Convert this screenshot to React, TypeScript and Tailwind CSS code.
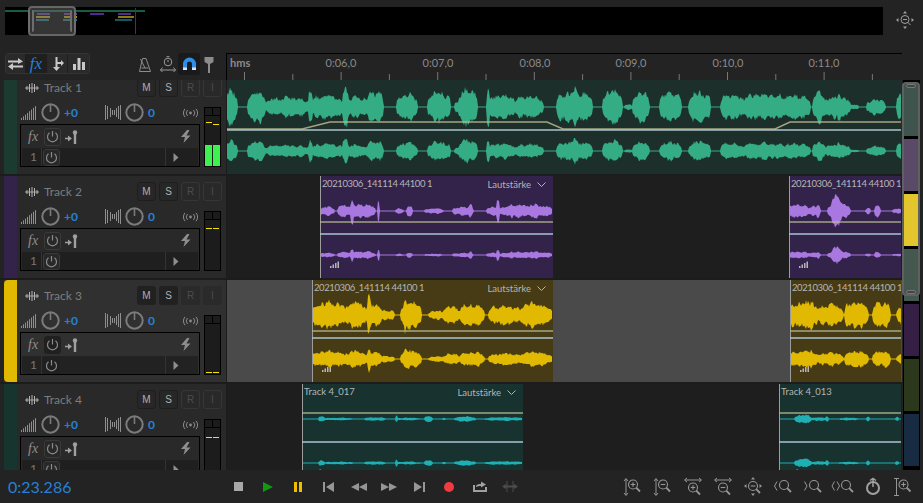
import type { ReactNode } from 'react';

const FONT = "font-['Lato','Noto_Sans',sans-serif]";

type Blob = [number, number, number];

const noise = (x: number, seed: number) => {
    const v = Math.sin(x * 12.9898 + seed) * 43758.5453;
    return v - Math.floor(v);
};

// builds a mirrored waveform outline from a list of [start, end, amplitude] bursts
function wavePath(blobs: Blob[], from: number, to: number, cy: number, k: number, seed: number) {
    const top: string[] = [];
    const bottom: string[] = [];
    for (let x = from; x <= to; x += 1) {
        let up = 0.6;
        let down = 0.6;
        const slow = 0.84 + 0.16 * Math.sin(x * 0.63 + seed) * Math.sin(x * 0.17 + seed);
        for (const [s, e, amp] of blobs) {
            if (x < s || x > e) continue;
            const env = Math.pow(Math.sin((Math.PI * (x - s + 0.5)) / (e - s + 1)), 0.25);
            up = Math.max(up, amp * k * env * slow * (0.72 + 0.38 * noise(x, seed)));
            down = Math.max(down, amp * k * env * slow * (0.72 + 0.38 * noise(x, seed + 7)));
        }
        top.push(`${x - 227},${(cy - up).toFixed(1)}`);
        bottom.unshift(`${x - 227},${(cy + down).toFixed(1)}`);
    }
    return `M${top.join(' L')} L${bottom.join(' L')} Z`;
}

const track1: Blob[] = [
    [222, 237, 19], [248, 265, 18], [265, 310, 11], [309, 312, 22], [312, 342, 14], [343, 348, 25], [345, 367, 12],
    [367, 383, 18], [397, 417, 15], [428, 450, 17], [438, 440, 21], [455, 459, 7], [459, 477, 21], [487, 489, 23], [489, 515, 14],
    [515, 543, 13], [557, 592, 18], [573, 576, 22], [603, 622, 19], [611, 613, 22], [625, 632, 3], [633, 649, 17],
    [660, 681, 17], [689, 710, 17], [699, 701, 21], [721, 740, 15], [738, 790, 15], [780, 810, 14], [813, 825, 17],
    [824, 850, 12], [838, 840, 22], [850, 858, 3], [867, 885, 9], [897, 905, 15],
];
const track2a: Blob[] = [
    [320, 334, 5], [338, 352, 7], [351, 353, 15], [350, 375, 8], [378, 379, 15], [396, 403, 3], [407, 412, 6],
    [425, 443, 3], [453, 473, 5], [469, 472, 9], [487, 500, 5], [497, 499, 17], [500, 553, 7], [511, 513, 10], [535, 538, 11],
];
const track2b: Blob[] = [
    [789, 808, 8], [808, 820, 6], [817, 819, 9], [832, 842, 19], [828, 850, 8], [866, 870, 4], [875, 880, 7], [893, 901, 3],
];
const track3a: Blob[] = [
    [312, 345, 15], [345, 366, 15], [367, 381, 14], [368, 370, 21], [381, 394, 6], [401, 421, 16], [404, 406, 24],
    [429, 445, 5], [443, 460, 10], [460, 484, 13], [489, 520, 11], [520, 548, 14], [548, 553, 7],
];
const track3b: Blob[] = [
    [789, 818, 15], [810, 813, 21], [818, 843, 12], [845, 868, 15], [873, 890, 15], [897, 906, 9],
];
const track4a: Blob[] = [
    [319, 324, 3.5], [324, 353, 1.5], [365, 385, 2], [396, 420, 1.5], [396, 397, 4], [425, 432, 3.5], [443, 445, 1.5],
    [455, 475, 3], [485, 523, 2],
];
const track4b: Blob[] = [
    [795, 811, 5], [811, 826, 2], [826, 828, 4], [839, 858, 1.5], [867, 869, 3.5], [896, 898, 3],
];

type Clip = { pos: string; title: string; right: boolean };

type Track = {
    name: string;
    strip: string;
    panel: string;
    lane: string;
    clipBg: string;
    clips: Clip[];
    wave: string;
    waves: { blobs: Blob[]; from: number; to: number }[];
    k: number;
    volume: string;
    yellow: string;
    green?: boolean;
    selected?: boolean;
};

const clip2 = '20210306_141114 44100 1';

const tracks: Track[] = [
    {
        name: 'Track 1', strip: 'bg-[#1b3a30]', panel: 'bg-[#292929]', lane: 'bg-[#1d2f2a]', clipBg: '', clips: [], wave: '#35ad84',
        waves: [{ blobs: track1, from: 227, to: 901 }], k: 0.62,
        volume: 'M0,57 L75,57 L103,50 L320,50 L336,57 L548,57 L563,50 L674,50', yellow: 'top-[14px]', green: true,
    },
    {
        name: 'Track 2', strip: 'bg-[#33224a]', panel: 'bg-[#292929]', lane: 'bg-[#1e1e1e]', clipBg: 'bg-[#33224a]',
        clips: [
            { pos: 'left-[93px] w-[233px]', title: clip2, right: true },
            { pos: 'left-[562px] w-[112px]', title: clip2, right: false },
        ],
        wave: '#a877e0',
        waves: [{ blobs: track2a, from: 321, to: 552 }, { blobs: track2b, from: 790, to: 901 }], k: 0.5,
        volume: 'M93,46 L326,46 M562,46 L674,46', yellow: 'top-[16px]',
    },
    {
        name: 'Track 3', strip: 'bg-[#e0b900] rounded-l-[4px]', panel: 'bg-[#303030]', lane: 'bg-[#4a4a4a]', clipBg: 'bg-[#463b14]',
        clips: [
            { pos: 'left-[85px] w-[241px]', title: clip2, right: true },
            { pos: 'left-[563px] w-[111px]', title: clip2, right: false },
        ],
        wave: '#e0b900',
        waves: [{ blobs: track3a, from: 313, to: 552 }, { blobs: track3b, from: 791, to: 901 }], k: 0.62,
        volume: 'M85,51 L326,51 M563,51 L674,51', yellow: 'top-[56px]', selected: true,
    },
    {
        name: 'Track 4', strip: 'bg-[#17352f]', panel: 'bg-[#292929]', lane: 'bg-[#1e1e1e]', clipBg: 'bg-[#183230]',
        clips: [
            { pos: 'left-[75px] w-[221px]', title: 'Track 4_017', right: true },
            { pos: 'left-[552px] w-[122px]', title: 'Track 4_013', right: false },
        ],
        wave: '#1fb0b4',
        waves: [{ blobs: track4a, from: 303, to: 522 }, { blobs: track4b, from: 780, to: 901 }], k: 1,
        volume: 'M75,29 L296,29 M552,29 L674,29', yellow: 'top-[17px]',
    },
];

const G = ({ w, h, className, children }: { w: number; h: number; className?: string; children: ReactNode }) => (
    <svg width={w} height={h} viewBox={`0 0 ${w} ${h}`} className={`shrink-0 ${className ?? ''}`} fill="none">
        {children}
    </svg>
);

const Knob = () => (
    <G w={19} h={19}>
        <circle cx="9.5" cy="9.5" r="8.2" stroke="#7b7b7b" strokeWidth="2" />
        <path d="M9.5 1.5V9" stroke="#7b7b7b" strokeWidth="1.6" />
    </G>
);

const VolBars = () => (
    <G w={15} h={15}>
        {[0, 2, 4, 6, 8, 10, 12, 14].map((x, i) => (
            <rect key={x} x={x} y={13 - i * 1.7} width="1" height={2 + i * 1.7} fill="#8f8f8f" />
        ))}
    </G>
);

const PanBars = () => (
    <G w={16} h={15}>
        {[
            [0, 0, 15], [2, 1, 13], [5, 3, 9], [7, 5, 5], [9, 5, 5], [11, 3, 9], [13, 1, 13], [15, 0, 15],
        ].map(([x, y, h]) => (
            <rect key={x} x={x} y={y} width="1" height={h} fill="#8f8f8f" />
        ))}
    </G>
);

const Sends = () => (
    <G w={15} h={10}>
        <circle cx="7.5" cy="5" r="1.4" fill="#8a8a8a" />
        <path d="M4.5 2a4.5 4.5 0 0 0 0 6M10.5 2a4.5 4.5 0 0 1 0 6M2 .8a7 7 0 0 0 0 8.4M13 .8a7 7 0 0 1 0 8.4" stroke="#8a8a8a" strokeWidth="1" />
    </G>
);

const TrackWave = () => (
    <G w={14} h={10}>
        <path d="M0 5H14" stroke="#a5a5a5" />
        {[[2, 3], [4.5, 1], [7, 0], [9.5, 1], [12, 3]].map(([x, y]) => (
            <rect key={x} x={x - 0.5} y={y} width="1" height={10 - y * 2} fill="#b5b5b5" />
        ))}
    </G>
);

const PowerBtn = ({ selected, small }: { selected?: boolean; small?: boolean }) => (
    <div className={`flex items-center justify-center rounded-[3px] w-[17px] ${small ? 'h-[17px]' : 'h-[18px]'} ${selected ? 'bg-[#202020]' : 'border border-[#3a3a3a] bg-[#282828]'}`}>
        <G w={13} h={13}>
            <path d="M6.5 1V6.5" stroke="#8a8a8a" strokeWidth="1.2" />
            <path d="M3.5 2.8a5 5 0 1 0 6 0" stroke="#8a8a8a" strokeWidth="1.2" />
        </G>
    </div>
);

const TrackButton = ({ label, dim, selected }: { label: string; dim?: boolean; selected?: boolean }) => (
    <div
        className={`flex w-[19px] h-[19px] items-center justify-center rounded-[3px] text-[10px] font-['Liberation_Sans',sans-serif]
            ${dim ? 'text-[#4c4c4c]' : 'text-[#b0b0b0]'}
            ${selected ? (dim ? 'bg-[#2a2a2a]' : 'bg-[#212121]') : dim ? 'border border-[#363636]' : 'border border-[#1e1e1e] bg-[#272727]'}`}
    >
        {label}
    </div>
);

const Meter = ({ t }: { t: Track }) => (
    <div className="relative mt-[4px] ml-[4px] flex h-[60px] w-[17px] flex-col border border-black bg-[#1c1c1c]">
        <div className="flex h-[8px] border-b border-black">
            <div className="w-1/2 border-r border-black" />
        </div>
        <div className={`absolute left-[1px] h-px w-[6px] bg-[#f4e300] ${t.yellow}`} />
        <div className={`absolute right-[1px] h-px w-[6px] bg-[#f4e300] ${t.yellow} ${t.green ? 'mt-[2px]' : ''}`} />
        {t.green && (
            <div className="absolute bottom-0 left-0 flex h-[21px] w-full gap-px">
                <div className="flex-1 bg-[#3df24f]" />
                <div className="flex-1 bg-[#3df24f]" />
            </div>
        )}
    </div>
);

const Header = ({ t }: { t: Track }) => (
    <div className={`ml-[4px] flex h-full w-[222px] shrink-0 ${t.panel}`}>
        <div className={`w-[13px] shrink-0 ${t.strip}`} />
        <div className="flex flex-1 flex-col pt-[6px]">
            <div className="flex h-[19px] items-center">
                <div className="ml-[8px]"><TrackWave /></div>
                <span className="ml-[5px] text-[12px] text-[#7d7d7d]">{t.name}</span>
                <div className="ml-auto mr-[4px] flex gap-[3px]">
                    <TrackButton label="M" selected={t.selected} />
                    <TrackButton label="S" selected={t.selected} />
                    <TrackButton label="R" dim selected={t.selected} />
                    <TrackButton label="I" dim selected={t.selected} />
                </div>
            </div>
            <div className="mt-[6px] flex items-start">
                <div className="w-[183px]">
                    <div className="flex h-[19px] items-center">
                        <div className="ml-[4px]"><VolBars /></div>
                        <div className="ml-[5px]"><Knob /></div>
                        <span className="ml-[4px] w-[41px] text-[12px] font-bold text-[#2680d8]">+0</span>
                        <PanBars />
                        <div className="ml-[4px]"><Knob /></div>
                        <span className="ml-[4px] w-[35px] text-[12px] font-bold text-[#2680d8]">0</span>
                        <Sends />
                    </div>
                    <div className="ml-[3px] mt-[2px] flex h-[43px] w-[180px] flex-col border border-black px-px">
                        <div className="flex h-[23px] items-center">
                            <span className="ml-[6px] w-[16px] font-['Liberation_Serif',serif] text-[14px] italic text-[#8e8e8e]">fx</span>
                            <PowerBtn selected={t.selected} />
                            <G w={13} h={14} className="ml-[4px]">
                                <path d="M0 8.500H4" stroke="#a0a0a0" strokeWidth="1.500" />
                                <path d="M3 5.500L7 8.500L3 11.500Z" fill="#a0a0a0" />
                                <circle cx="10" cy="2.500" r="2.200" fill="#a0a0a0" />
                                <rect x="8.800" y="4" width="2.400" height="10" fill="#a0a0a0" />
                            </G>
                            <G w={11} h={13} className="ml-auto mr-[7px]">
                                <path d="M7 0L1 7H5L3.500 13L10.500 5.500H6.500L9.500 0Z" fill="#8e8e8e" />
                            </G>
                        </div>
                        <div className={`flex h-[18px] items-center rounded-[2px] ${t.selected ? 'bg-[#222]' : 'bg-[#1f1f1f]'}`}>
                            <span className="w-[20px] border-r border-[#333] pl-[8px] text-[12px] leading-[18px] text-[#777]">1</span>
                            <div className="ml-px"><PowerBtn small selected={t.selected} /></div>
                            <div className="ml-[105px] flex h-full items-center border-l border-[#333] pl-[7px]">
                                <G w={6} h={9}>
                                    <path d="M0.500 0L5.500 4.500L0.500 9Z" fill="#8e8e8e" />
                                </G>
                            </div>
                        </div>
                    </div>
                </div>
                <Meter t={t} />
            </div>
        </div>
    </div>
);

const MiniBars = () => (
    <G w={10} h={7} className="absolute left-[9px] top-[85px]">
        {[0, 2.500, 5, 7.500].map((x, i) => (
            <rect key={x} x={x} y={5 - i * 1.500} width="1.500" height={2 + i * 1.500} fill="#b5b5b5" />
        ))}
    </G>
);

const ClipBox = ({ c, bg }: { c: Clip; bg: string }) => (
    <div className={`absolute top-0 h-full overflow-hidden border-l-[1.5px] border-[#9c9c9c] ${bg} ${c.pos}`}>
        <div className="flex h-[15px] items-center whitespace-nowrap pl-[1px] pt-[2px] text-[9.5px] text-[#b5b5b5]">
            <span className={c.title === clip2 ? 'tracking-[-0.4px]' : ''}>{c.title}</span>
            {c.right && (
                <div className="absolute right-[7px] top-[2px] flex items-center gap-[6px]">
                    <span>Lautstärke</span>
                    <G w={9} h={6}>
                        <path d="M0.500 0.500L4.500 4.500L8.500 0.500" stroke="#b5b5b5" />
                    </G>
                </div>
            )}
        </div>
        <MiniBars />
    </div>
);

// the pan line runs along the same spans as the volume line
function panSpan(t: Track, i: number) {
    const spans = t.volume.split('M').filter(Boolean)[i].match(/[\d.]+/g) as string[];
    return `M${spans[0]},58 L${spans[2]},58`;
}

const Lane = ({ t, seed }: { t: Track; seed: number }) => (
    <div className={`relative h-full flex-1 overflow-hidden ${t.lane}`}>
        {t.clips.map((c) => (
            <ClipBox key={c.pos} c={c} bg={t.clipBg} />
        ))}
        <svg width="674" height="102" viewBox="0 0 674 102" className="absolute left-0 top-0" fill="none">
            {t.waves.map((w) => (
                <g key={w.from} fill={t.wave}>
                    <path d={wavePath(w.blobs, w.from, w.to, 35, 1, seed + w.from)} />
                    <path d={wavePath(w.blobs, w.from, w.to, 79, t.k, seed + w.from + 3)} />
                </g>
            ))}
            <path d={t.volume} stroke="#b8b890" strokeOpacity="0.85" strokeWidth="1.500" />
            {t.clips.length > 0
                ? t.clips.map((c, i) => <path key={c.pos} d={panSpan(t, i)} stroke="#a8c4d0" strokeWidth="1.500" />)
                : <path d="M0,58 L674,58" stroke="#a8c4d0" strokeWidth="1.500" />}
        </svg>
    </div>
);

const TopToolbar = () => (
    <div className="flex h-[28px] w-[226px] shrink-0 items-start pl-[5px] pt-px">
        <div className="flex h-[21px] divide-x divide-[#1e1e1e] rounded-[3px] border border-[#333]">
            <div className="flex w-[20px] items-center justify-center bg-[#2a2a2a]">
                <G w={15} h={14}>
                    <path d="M0 3.500H10V1L15 4.500L10 7V5.500H0ZM15 8.500H5V6L0 9.500L5 13V10.500H15Z" fill="#c8c8c8" />
                </G>
            </div>
            <div className="flex w-[21px] items-center justify-center bg-[#1f1f1f] font-['Liberation_Serif',serif] text-[17px] italic leading-none text-[#2680d8]">fx</div>
            <div className="flex w-[21px] items-center justify-center bg-[#2a2a2a]">
                <G w={13} h={14}>
                    <path d="M4.500 0H6.500V5L10 5V3L13 6L10 9V7H6.500V10H9L5.500 14L2 10H4.500Z" fill="#c8c8c8" />
                </G>
            </div>
            <div className="flex w-[21px] items-center justify-center bg-[#2a2a2a]">
                <G w={12} h={12}>
                    <path d="M0 6H3V12H0ZM4.500 0H7.500V12H4.500ZM9 4H12V12H9Z" fill="#c8c8c8" />
                </G>
            </div>
        </div>
        <G w={12} h={14} className="ml-[49px] mt-[5px]">
            <path d="M3.500 0.500H7L11.500 13.500H0.500ZM2.500 10H9.500M6 10L1.500 1" stroke="#8c8c8c" />
        </G>
        <G w={16} h={16} className="ml-[9px] mt-[3px]">
            <circle cx="8" cy="6" r="3.800" stroke="#9a9a9a" />
            <path d="M8 4V6.200M6.500 0.700H9.500M0.500 14H15.500M2.500 11.500L0.500 14L2.500 16M13.500 11.500L15.500 14L13.500 16" stroke="#9a9a9a" />
        </G>
        <div className="ml-[2px] flex h-[22px] w-[22px] items-center justify-center rounded-[3px] bg-[#1a1a1a]">
            <G w={15} h={14}>
                <path d="M1 13V7a6.500 6.500 0 0 1 13 0V13H10V7a2.500 2.500 0 0 0-5 0V13Z" fill="#2f8fe8" />
                <path d="M1 10.500H5V13H1ZM10 10.500H14V13H10Z" fill="#d5e8f8" />
            </G>
        </div>
        <G w={10} h={16} className="ml-[4px] mt-[4px]">
            <path d="M0.500 0H9.500V5L6 7V16H4V7L0.500 5Z" fill="#8c8c8c" />
        </G>
    </div>
);

const majors = ['0:06,0', '0:07,0', '0:08,0', '0:09,0', '0:10,0', '0:11,0'];

const Ruler = () => (
    <div className="relative mt-px h-[27px] w-[676px] border-l border-t border-black text-[11px] text-[#8a8a8a]">
        <span className="absolute left-[3px] top-[1px] font-bold">hms</span>
        {majors.map((m, i) => (
            <span key={m} className={`absolute top-[1px] w-[40px] text-center ${['left-[94px]', 'left-[191px]', 'left-[288px]', 'left-[384px]', 'left-[481px]', 'left-[577px]'][i]}`}>
                {m}
            </span>
        ))}
        <svg width="675" height="26" viewBox="0 0 675 26" className="absolute left-0 top-0">
            {[0, 1, 2, 3, 4, 5, 6, 7, 8, 9, 10, 11, 12, 13].map((i) => {
                const x = 17.500 + i * 48.300;
                return <path key={i} d={`M${x} ${i % 2 === 0 ? 18 : 20}V26`} stroke="#777" />;
            })}
        </svg>
    </div>
);

const OverviewBar = ({ cls }: { cls: string }) => <div className={`absolute ${cls}`} />;

const TopBar = () => (
    <div className="flex h-[52px] shrink-0 items-start pl-[5px] pt-[7px]">
        <div className="relative h-[28px] w-[878px] bg-black">
            <OverviewBar cls="left-0 top-[3px] h-[2px] w-[140px] bg-[#1a5c42]" />
            <OverviewBar cls="left-[32px] top-[6px] h-[2px] w-[13px] bg-[#5f3aa0]" />
            <OverviewBar cls="left-[59px] top-[6px] h-[2px] w-[13px] bg-[#5f3aa0]" />
            <OverviewBar cls="left-[85px] top-[6px] h-[2px] w-[14px] bg-[#4f2a90]" />
            <OverviewBar cls="left-[113px] top-[6px] h-[2px] w-[13px] bg-[#4f2a90]" />
            <OverviewBar cls="left-[31px] top-[9px] h-[2px] w-[14px] bg-[#b09a10]" />
            <OverviewBar cls="left-[59px] top-[9px] h-[2px] w-[13px] bg-[#b09a10]" />
            <OverviewBar cls="left-[113px] top-[9px] h-[2px] w-[16px] bg-[#8a7a10]" />
            <OverviewBar cls="left-[31px] top-[12px] h-[2px] w-[13px] bg-[#1f7478]" />
            <OverviewBar cls="left-[58px] top-[12px] h-[2px] w-[14px] bg-[#1f7478]" />
            <OverviewBar cls="left-[110px] top-[12px] h-[2px] w-[17px] bg-[#155a60]" />
            <OverviewBar cls="left-[130px] top-px h-[26px] w-px bg-[#8c1a1a]" />
            <div className="absolute left-[23px] top-[-1px] flex h-[30px] w-[48px] items-stretch justify-between rounded-[4px] border-2 border-[#666] bg-[#6a6a6a]/50">
                <div className="-ml-[2px] my-[2px] w-[6px] rounded-[2px] border-x-2 border-[#6e6e6e] bg-[#333]" />
                <div className="-mr-[2px] my-[2px] w-[6px] rounded-[2px] border-x-2 border-[#6e6e6e] bg-[#333]" />
            </div>
        </div>
        <G w={18} h={18} className="ml-[13px] mt-[4px]">
            <circle cx="9" cy="8.500" r="4" stroke="#a0a0a0" />
            <path d="M7 8.500H11M12 11.500L14.500 14" stroke="#a0a0a0" />
            <path d="M9 0L11 2.500H7ZM9 18L7 15.500H11ZM0 9L2.500 7V11ZM18 9L15.500 11V7Z" fill="#a0a0a0" />
        </G>
    </div>
);

const Scrollbar = () => {
    const segments = ['bg-[#3f544c]', 'bg-[#5a4a68]', 'bg-[#e3c62d]', 'bg-[#44584f]', 'bg-[#361f45]', 'bg-[#2b381c]', 'bg-[#172c42]'];
    return (
        <div className="relative h-full w-[21px] shrink-0 pl-px pr-[3px]">
            <div className="flex h-full flex-col gap-[3px] bg-black px-px pt-[4px]">
                {segments.map((s) => (
                    <div key={s} className={`h-[52px] shrink-0 ${s}`} />
                ))}
            </div>
            <div className="absolute left-0 top-[2px] flex h-[214px] w-[18px] flex-col justify-between rounded-[4px] border-2 border-[#5f6060]">
                <div className="mx-auto h-[4px] w-[10px] rounded-[2px] border border-[#777] bg-[#444]" />
                <div className="mx-auto h-[4px] w-[10px] rounded-[2px] border border-[#777] bg-[#444]" />
            </div>
        </div>
    );
};

const Mag = ({ cx, cy, sign }: { cx: number; cy: number; sign?: 'plus' | 'minus' }) => (
    <g stroke="#969696" strokeWidth="1.100" fill="none">
        <circle cx={cx} cy={cy} r="4.500" />
        <path d={`M${cx + 3.200} ${cy + 3.200}L${cx + 7} ${cy + 7}`} strokeWidth="1.800" />
        {sign && <path d={`M${cx - 2.300} ${cy}H${cx + 2.300}`} />}
        {sign === 'plus' && <path d={`M${cx} ${cy - 2.300}V${cy + 2.300}`} />}
    </g>
);

const vArrow = 'M3 2V18M1 4L3 1.500L5 4M1 16L3 18.500L5 16';
const hArrow = 'M2 3H18M4 1L1.500 3L4 5M16 1L18.500 3L16 5';

const ZoomBox = ({ children, w = 20 }: { children: ReactNode; w?: number }) => (
    <div className="flex w-[30px] justify-center">
        <svg width={w} height={20} viewBox={`0 0 ${w} 20`} fill="none">
            {children}
        </svg>
    </div>
);

const ZoomIcons = () => (
    <div className="ml-[93px] flex">
        <ZoomBox><path d={vArrow} stroke="#969696" /><Mag cx={10} cy={7.500} sign="plus" /></ZoomBox>
        <ZoomBox><path d={vArrow} stroke="#969696" /><Mag cx={10} cy={7.500} sign="minus" /></ZoomBox>
        <ZoomBox><path d={hArrow} stroke="#969696" /><Mag cx={10} cy={10.500} sign="plus" /></ZoomBox>
        <ZoomBox><path d={hArrow} stroke="#969696" /><Mag cx={10} cy={10.500} sign="minus" /></ZoomBox>
        <ZoomBox>
            <Mag cx={10} cy={9} sign="minus" />
            <path d="M10 0L12 2.500H8ZM10 19L8 16.500H12ZM1 9L3.500 7V11ZM19 9L16.500 11V7Z" fill="#969696" />
        </ZoomBox>
        <ZoomBox><path d="M4 4.500L1.500 9L4 13.500" stroke="#969696" /><Mag cx={11} cy={8} /></ZoomBox>
        <ZoomBox><path d="M1.500 4.500L4 9L1.500 13.500" stroke="#969696" /><Mag cx={11} cy={8} /></ZoomBox>
        <ZoomBox w={24}><path d="M3.500 4.500L1 9L3.500 13.500M6 4.500L8.500 9L6 13.500" stroke="#969696" /><Mag cx={15} cy={8} /></ZoomBox>
        <ZoomBox>
            <circle cx="10" cy="11" r="6" stroke="#a0a0a0" strokeWidth="2" />
            <path d="M10 2V10M7 3.500L10 1.500L13 3.500" stroke="#a0a0a0" strokeWidth="1.500" />
        </ZoomBox>
        <ZoomBox><path d="M1 1.500H6M1 18.500H6M3.500 1.500V18.500" stroke="#969696" /><Mag cx={10.500} cy={7.500} sign="plus" /></ZoomBox>
    </div>
);

const Transport = () => (
    <div className="flex h-[33px] shrink-0 items-center">
        <span className="w-[223px] pl-[8px] text-[16px] text-[#2680d8]">0:23.286</span>
        <div className="flex items-center [&>div]:flex [&>div]:w-[30.2px] [&>div]:justify-center">
            <div><G w={9} h={9}><rect width="9" height="9" fill="#a8a8a8" /></G></div>
            <div><G w={10} h={10}><path d="M0 0L10 5L0 10Z" fill="#0f9a12" /></G></div>
            <div><G w={8} h={10}><path d="M0 0H3V10H0ZM5 0H8V10H5Z" fill="#f0bc00" /></G></div>
            <div><G w={11} h={10}><path d="M0 0H2V10H0ZM11 0V10L3 5Z" fill="#969696" /></G></div>
            <div><G w={16} h={8}><path d="M8 0V8L0 4ZM16 0V8L8 4Z" fill="#969696" /></G></div>
            <div><G w={16} h={8}><path d="M0 0V8L8 4ZM8 0V8L16 4Z" fill="#969696" /></G></div>
            <div><G w={11} h={10}><path d="M0 0V10L8 5ZM9 0H11V10H9Z" fill="#969696" /></G></div>
            <div><G w={10} h={10}><circle cx="5" cy="5" r="5" fill="#f03c40" /></G></div>
            <div>
                <G w={14} h={11}>
                    <path d="M1 4V10H13V6" stroke="#a0a0a0" strokeWidth="2" />
                    <path d="M3 6C3 3 6 3 8 3V0.500L13 3.500L8 6.500V5C6 5 5 5 3 6Z" fill="#a0a0a0" />
                </G>
            </div>
            <div>
                <G w={16} h={11}>
                    <path d="M5 0V11M11 0V11" stroke="#4c4c4c" />
                    <path d="M0 5.500L4 3V8ZM16 5.500L12 3V8ZM4 4.500H12V6.500H4Z" fill="#4c4c4c" />
                </G>
            </div>
        </div>
        <ZoomIcons />
    </div>
);

export default function App() {
    return (
        <div className={`flex h-[503px] w-[923px] flex-col overflow-hidden bg-[#232323] ${FONT}`}>
            <TopBar />
            <div className="flex h-[28px] shrink-0">
                <TopToolbar />
                <Ruler />
            </div>
            <div className="flex h-[390px] shrink-0">
                <div className="w-[902px] overflow-hidden bg-[#1c1c1c]">
                    <div className="-mt-[8px] flex flex-col gap-[2px]">
                        {tracks.map((t, i) => (
                            <div key={t.name} className="flex h-[102px] shrink-0 bg-[#232323]">
                                <Header t={t} />
                                <div className="w-px shrink-0 bg-[#1c1c1c]" />
                                <Lane t={t} seed={i * 11 + 3} />
                            </div>
                        ))}
                    </div>
                </div>
                <Scrollbar />
            </div>
            <Transport />
        </div>
    );
}
